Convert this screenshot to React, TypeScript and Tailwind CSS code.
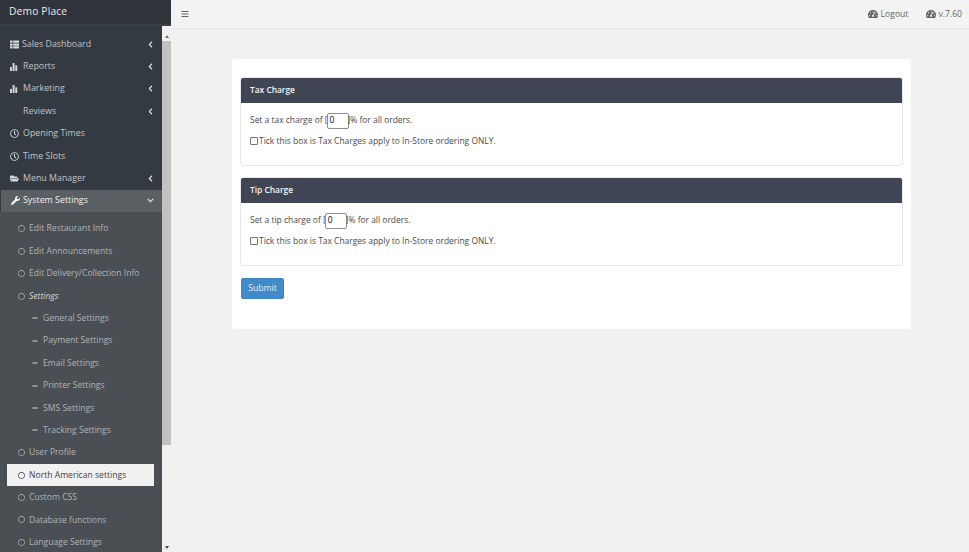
import React from 'react';
import {
  FaThList,
  FaRegClock,
  FaFolderOpen,
  FaWrench,
  FaRegCircle,
  FaMinus,
  FaChevronLeft,
  FaChevronDown,
  FaBars,
  FaTachometerAlt,
} from 'react-icons/fa';

const BarsIcon = () => (
  <svg viewBox="0 0 10 10" className="w-[8px] h-[8px] fill-current">
    <rect x="0" y="5" width="2.4" height="5" />
    <rect x="3.3" y="0" width="2.4" height="10" />
    <rect x="6.6" y="3" width="2.4" height="7" />
  </svg>
);

const topItems = [
  { label: 'Sales Dashboard', icon: <FaThList size={9} />, arrow: true, gap: 'w-[22px]' },
  { label: 'Reports', icon: <BarsIcon />, arrow: true, gap: 'w-[23px]' },
  { label: 'Marketing', icon: <BarsIcon />, arrow: true, gap: 'w-[23px]' },
  { label: 'Reviews', icon: null, arrow: true, gap: 'w-[23px]' },
  { label: 'Opening Times', icon: <FaRegClock size={9} />, arrow: false, gap: 'w-[23px]' },
  { label: 'Time Slots', icon: <FaRegClock size={9} />, arrow: false, gap: 'w-[23px]' },
  { label: 'Menu Manager', icon: <FaFolderOpen size={9} />, arrow: true, gap: 'w-[23px]' },
];

type SubItem = { label: string; kind: 'circle' | 'italic' | 'dash' | 'active' };

const subItems: SubItem[] = [
  { label: 'Edit Restaurant Info', kind: 'circle' },
  { label: 'Edit Announcements', kind: 'circle' },
  { label: 'Edit Delivery/Collection Info', kind: 'circle' },
  { label: 'Settings', kind: 'italic' },
  { label: 'General Settings', kind: 'dash' },
  { label: 'Payment Settings', kind: 'dash' },
  { label: 'Email Settings', kind: 'dash' },
  { label: 'Printer Settings', kind: 'dash' },
  { label: 'SMS Settings', kind: 'dash' },
  { label: 'Tracking Settings', kind: 'dash' },
  { label: 'User Profile', kind: 'circle' },
  { label: 'North American settings', kind: 'active' },
  { label: 'Custom CSS', kind: 'circle' },
  { label: 'Database functions', kind: 'circle' },
  { label: 'Language Settings', kind: 'circle' },
];

const ChargeCard = ({ title, word }: { title: string; word: string }) => (
  <div className="rounded-[3px] bg-white shadow-[0_0_0_1px_#e8e8e8]">
    <div className="h-[24.5px] bg-[#3f4555] rounded-t-[2px] flex items-center px-[9px] text-[#f4f4f4] font-semibold text-[8.4px]">
      {title}
    </div>
    <div className="h-[62.5px] px-[9px] pt-[10px] text-[#4a4a4a] text-[8.45px]">
      <div className="flex items-center h-[16px]">
        <span>Set a {word} charge of [</span>
        <span className="w-[22px] h-[16px] border border-[#8f8f8f] rounded-[2px] flex items-center px-[2px] text-black bg-white -mx-px">
          0
        </span>
        <span>]% for all orders.</span>
      </div>
      <div className="flex items-center h-[14px] mt-[6px]">
        <span className="w-[8px] h-[8px] border border-[#767676] rounded-[1px] bg-white mr-[1px] -translate-y-[1px]" />
        <span>Tick this box is Tax Charges apply to In-Store ordering ONLY.</span>
      </div>
    </div>
  </div>
);

export default function App() {
  return (
    <div className="w-[969px] h-[552px] overflow-hidden flex bg-[#f1f1f1] font-['Open_Sans',sans-serif]">
      {/* Sidebar */}
      <aside className="w-[171px] h-full flex flex-col shrink-0">
        <div className="h-[26px] bg-[#2f343b] border-b-2 border-[#3a4047] text-[#ececec] text-[10.2px] flex items-center pl-[9px] tracking-[0.2px] shrink-0">
          Demo Place
        </div>
        <div className="flex-1 flex min-h-0">
          <nav className="w-[162px] bg-[#343a41] pt-[7px] overflow-hidden text-[#c0c3c7] text-[8.85px]">
            {topItems.map((item) => (
              <div key={item.label} className="h-[22.4px] flex items-center pl-[10px] pr-[8px]">
                <span className={`${item.gap} flex items-center shrink-0 -mr-[10px] text-[#d5d7da]`}>{item.icon}</span>
                <span className="flex-1">{item.label}</span>
                {item.arrow && <FaChevronLeft size={7} className="text-[#e8e8e8]" />}
              </div>
            ))}
            <div className="h-[22.4px] bg-[#5a5f64] ml-px flex items-center pl-[10px] pr-[8px] text-[#f0f0f0] font-medium">
              <span className="w-[12px] flex items-center shrink-0">
                <FaWrench size={9} />
              </span>
              <span className="flex-1">System Settings</span>
              <FaChevronDown size={7} />
            </div>
            <div className="bg-[#4a4f54] pt-[5.6px] h-full text-[#b0b3b6] text-[8.6px]">
              {subItems.map((sub) => {
                if (sub.kind === 'active') {
                  return (
                    <div
                      key={sub.label}
                      className="h-[22.4px] ml-[7px] mr-[8px] bg-[#f1f1f1] text-[#444] flex items-center pl-[11px]"
                    >
                      <FaRegCircle size={7} className="mr-[4px]" />
                      {sub.label}
                    </div>
                  );
                }
                if (sub.kind === 'dash') {
                  return (
                    <div key={sub.label} className="h-[22.4px] flex items-center pl-[32px]">
                      <FaMinus size={6} className="mr-[5px] text-[#d0d0d0]" />
                      {sub.label}
                    </div>
                  );
                }
                return (
                  <div key={sub.label} className="h-[22.4px] flex items-center pl-[18px]">
                    <FaRegCircle size={7} className="mr-[4px]" />
                    <span className={sub.kind === 'italic' ? 'italic text-[#d5d7da]' : ''}>{sub.label}</span>
                  </div>
                );
              })}
            </div>
          </nav>
          {/* Scrollbar */}
          <div className="w-[9px] mt-[6px] bg-[#f1f1f1] flex flex-col items-center shrink-0">
            <div className="h-[9px] flex items-center justify-center">
              <span className="w-0 h-0 border-x-[2px] border-x-transparent border-b-[3px] border-b-[#707070]" />
            </div>
            <div className="w-full h-[404px] bg-[#c1c1c1]" />
            <div className="flex-1" />
            <div className="h-[9px] flex items-center justify-center">
              <span className="w-0 h-0 border-x-[2px] border-x-transparent border-t-[3px] border-t-[#505050]" />
            </div>
          </div>
        </div>
      </aside>

      {/* Main */}
      <main className="flex-1 min-w-0">
        <header className="h-[29px] border-b border-[#e5e5e5] bg-[#f3f3f3] flex items-center text-[#666] text-[8.6px]">
          <FaBars size={8} className="ml-[10px] text-[#666]" />
          <div className="flex-1" />
          <span className="flex items-center gap-[3px]">
            <FaTachometerAlt size={10} />
            Logout
          </span>
          <span className="flex items-center gap-[2px] ml-[18px] mr-[7px]">
            <FaTachometerAlt size={10} />
            v.7.60
          </span>
        </header>
        <div className="ml-[61px] mr-[58px] mt-[30px] h-[270px] bg-white rounded-[3px] px-[9px] pt-[19px]">
          <div className="flex flex-col gap-[13px]">
            <ChargeCard title="Tax Charge" word="tax" />
            <ChargeCard title="Tip Charge" word="tip" />
          </div>
          <button className="mt-[12.5px] w-[43px] h-[21px] bg-[#428bca] border border-[#3f85c2] rounded-[2px] text-[#e8f0f8] text-[8.6px] flex items-center justify-center">
            Submit
          </button>
        </div>
      </main>
    </div>
  );
}
